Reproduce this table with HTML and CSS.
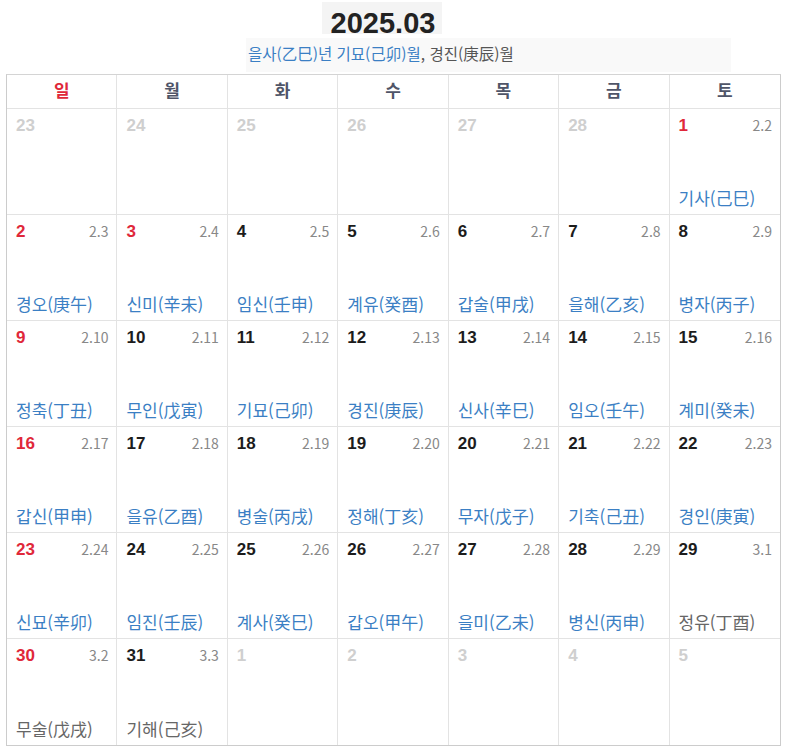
FILE: index.html
```html
<!DOCTYPE html>
<html lang="ko">
<head>
<meta charset="utf-8">
<link rel="stylesheet" href="styles.css">
</head>
<body>
<div class="page">
  <div class="title-row"><h1 class="title">2025.03</h1></div>
  <div class="sub"><span class="blue">을사(乙巳)년 기묘(己卯)월</span>, 경진(庚辰)월</div>
  <div class="cal" id="cal">
    <div class="wd sun">일</div><div class="wd">월</div><div class="wd">화</div><div class="wd">수</div><div class="wd">목</div><div class="wd">금</div><div class="wd">토</div>
  </div>
</div>
<script>
var cells = [
 ["23","","","o"],["24","","","o"],["25","","","o"],["26","","","o"],["27","","","o"],["28","","","o"],["1","2.2","기사(己巳)","r"],
 ["2","2.3","경오(庚午)","r"],["3","2.4","신미(辛未)","r"],["4","2.5","임신(壬申)",""],["5","2.6","계유(癸酉)",""],["6","2.7","갑술(甲戌)",""],["7","2.8","을해(乙亥)",""],["8","2.9","병자(丙子)",""],
 ["9","2.10","정축(丁丑)","r"],["10","2.11","무인(戊寅)",""],["11","2.12","기묘(己卯)",""],["12","2.13","경진(庚辰)",""],["13","2.14","신사(辛巳)",""],["14","2.15","임오(壬午)",""],["15","2.16","계미(癸未)",""],
 ["16","2.17","갑신(甲申)","r"],["17","2.18","을유(乙酉)",""],["18","2.19","병술(丙戌)",""],["19","2.20","정해(丁亥)",""],["20","2.21","무자(戊子)",""],["21","2.22","기축(己丑)",""],["22","2.23","경인(庚寅)",""],
 ["23","2.24","신묘(辛卯)","r"],["24","2.25","임진(壬辰)",""],["25","2.26","계사(癸巳)",""],["26","2.27","갑오(甲午)",""],["27","2.28","을미(乙未)",""],["28","2.29","병신(丙申)",""],["29","3.1","정유(丁酉)","g"],
 ["30","3.2","무술(戊戌)","rg"],["31","3.3","기해(己亥)","g"],["1","","","o"],["2","","","o"],["3","","","o"],["4","","","o"],["5","","","o"]
];
var cal = document.getElementById("cal");
cells.forEach(function(c){
  var d = document.createElement("div");
  d.className = "cell";
  var top = document.createElement("div");
  top.className = "top";
  var n = document.createElement("span");
  n.className = "num" + (c[3].indexOf("r")>=0 ? " red" : "") + (c[3]==="o" ? " other" : "");
  n.textContent = c[0];
  top.appendChild(n);
  if (c[1]) { var l = document.createElement("span"); l.className="lunar"; l.textContent=c[1]; top.appendChild(l); }
  d.appendChild(top);
  if (c[2]) { var g = document.createElement("div"); g.className = "gj" + (c[3].indexOf("g")>=0 ? " gray" : ""); g.textContent=c[2]; d.appendChild(g); }
  cal.appendChild(d);
});
</script>
</body>
</html>
```
FILE: styles.css
```css
* { box-sizing: border-box; }
body {
  margin: 0;
  background: #fff;
  font-family: "Liberation Sans", "Noto Sans CJK KR", sans-serif;
}
.page {
  width: 776px;
  margin-left: 6px;
}
.title-row {
  padding-top: 2px;
  height: 38px;
}
.title {
  margin: 0 0 0 316px;
  width: 120px;
  height: 32px;
  background: #f4f4f4;
  font-size: 29px;
  font-weight: bold;
  color: #222;
  line-height: 42px;
  text-align: center;
  padding-left: 2px;
}
.sub {
  margin-left: 240px;
  width: 485px;
  height: 34px;
  background: #f9f9f9;
  padding: 5px 0 0 2px;
  font-family: "Noto Sans CJK KR", sans-serif;
  font-size: 15.5px;
  line-height: 20px;
  color: #555;
}
.blue { color: #3b7fc4; }
.cal {
  display: grid;
  grid-template-columns: repeat(7, 1fr);
  grid-template-rows: 34px repeat(6, 106px);
  width: 775px;
  border-left: 1px solid #ccc;
  border-top: 1px solid #d4d4d4;
  border-right: 1px solid #ccc;
  border-bottom: 1px solid #ccc;
  margin-top: 2px;
  background: #fff;
}
.wd, .cell {
  border-right: 1px solid #e3e3e3;
  border-bottom: 1px solid #e3e3e3;
}
.wd:nth-child(7n), .cell:nth-child(7n) { border-right: none; }
.cell:nth-last-child(-n+7) { border-bottom: none; }
.wd {
  font-family: "Noto Sans CJK KR", sans-serif;
  font-weight: bold;
  font-size: 17px;
  color: #4f5568;
  text-align: center;
  line-height: 30px;
}
.wd.sun { color: #e0283a; }
.cell {
  display: flex;
  flex-direction: column;
  justify-content: space-between;
  padding: 6px 8px 5px 9px;
}
.top {
  display: flex;
  justify-content: space-between;
  align-items: baseline;
}
.num {
  font-weight: bold;
  font-size: 17px;
  color: #1c1c1c;
  line-height: 22px;
}
.num.red { color: #e0283a; }
.num.other { color: #cfcfcf; }
.lunar {
  font-family: "Noto Sans CJK KR", sans-serif;
  font-size: 14px;
  color: #888;
}
.gj {
  font-family: "Noto Sans CJK KR", sans-serif;
  font-size: 17px;
  line-height: 22px;
  color: #3b7fc4;
}
.gj.gray { color: #666; }
```
